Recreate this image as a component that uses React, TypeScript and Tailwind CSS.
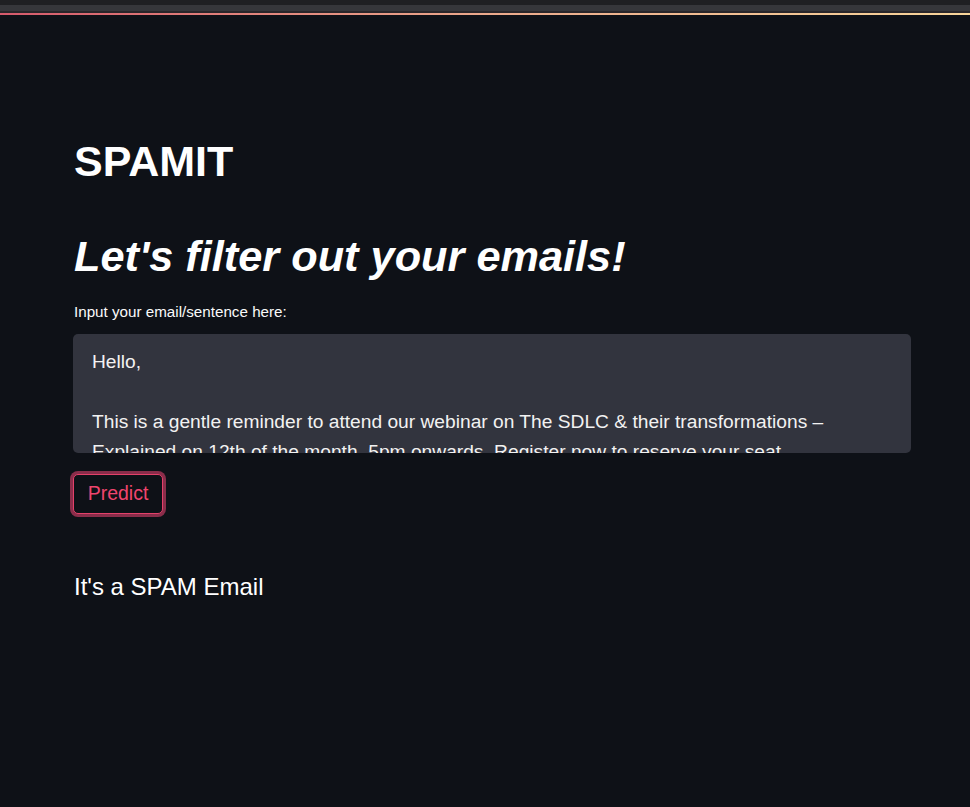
export default function App() {
  return (
    <div className="min-h-[807px] bg-[#0e1117] font-['Liberation_Sans',Arial,sans-serif] text-[#fafafa]">
      <div className="h-[5px] bg-[#1f2023]" />
      <div className="h-[6px] bg-[#36373b]" />
      <div className="h-[2px] bg-[#29262a]" />
      <div className="h-[2px] bg-gradient-to-r from-[#d65a6c] via-[#eba98c] to-[#f7d59a]" />

      <main className="px-[74px] pt-[116px]">
        <h1 className="text-[43px] font-bold leading-[60px] text-white">SPAMIT</h1>

        <h2 className="mt-[35px] text-[43.3px] font-bold italic leading-[60px] text-white">
          Let's filter out your emails!
        </h2>

        <label className="mt-[17px] block text-[15.2px] leading-[18px] text-[#fafafa]">
          Input your email/sentence here:
        </label>

        <textarea
          readOnly
          className="-ml-px mt-[13px] block h-[119px] w-[838px] resize-none overflow-hidden rounded-[5px] bg-[#32343e] px-[19px] pt-[13px] text-[19.2px] leading-[30px] text-[#f2f2f2] outline-none"
          defaultValue={
            'Hello,\n\nThis is a gentle reminder to attend our webinar on The SDLC & their transformations – Explained on 12th of the month, 5pm onwards. Register now to reserve your seat.'
          }
        />

        <button className="-ml-px mt-[21px] h-[40px] w-[90px] rounded-[5px] border-[1.5px] border-[#e3416a] bg-[#0e1117] text-[19.5px] text-[#f0456e] ring-[3px] ring-[#8a2d4a]">
          Predict
        </button>

        <p className="mt-[58px] text-[24px] leading-[30px] text-white">It's a SPAM Email</p>
      </main>
    </div>
  );
}
